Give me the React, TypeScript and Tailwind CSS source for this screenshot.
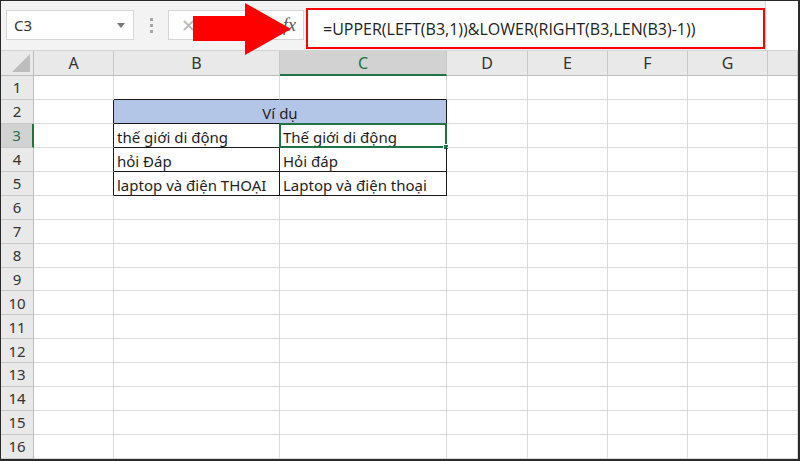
import React from "react";

const cols = [
  { key: "A", w: "w-[80px]" },
  { key: "B", w: "w-[166px]" },
  { key: "C", w: "w-[167px]" },
  { key: "D", w: "w-[81px]" },
  { key: "E", w: "w-[80px]" },
  { key: "F", w: "w-[80px]" },
  { key: "G", w: "w-[80px]" },
  { key: "H", w: "flex-1" },
];

const data: Record<string, string> = {
  B3: "thế giới di động",
  C3: "Thế giới di động",
  B4: "hỏi Đáp",
  C4: "Hỏi đáp",
  B5: "laptop và điện THOẠI",
  C5: "Laptop và điện thoại",
};

const inTable = (c: string, r: number) => (c === "B" || c === "C") && r >= 2 && r <= 5;

function Cell({ col, row }: { col: { key: string; w: string }; row: number }) {
  const k = col.key;
  const table = inTable(k, row);
  const rightBlack = table || (k === "A" && row >= 2 && row <= 5);
  const bottomBlack = (table && row >= 2) || ((k === "B" || k === "C") && row === 1);
  const selected = k === "C" && row === 3;
  return (
    <div
      className={`${col.w} h-full shrink-0 relative flex items-end pl-[3px] border-r border-b ${
        rightBlack ? "border-r-[#1a1a1a]" : "border-r-[#d9d9d9]"
      } ${bottomBlack ? "border-b-[#1a1a1a]" : "border-b-[#d9d9d9]"}`}
    >
      <span className="whitespace-nowrap leading-[20px]">{data[k + row] ?? ""}</span>
      {selected && (
        <div className="absolute -left-px -top-px -right-px -bottom-px border-2 border-[#217346]">
          <div className="absolute -right-[4px] -bottom-[4px] w-[6px] h-[6px] bg-[#217346] border border-white" />
        </div>
      )}
    </div>
  );
}

function Row({ row }: { row: number }) {
  const sel = row === 3;
  return (
    <div className="flex h-[24px]">
      <div
        className={`w-[33px] shrink-0 h-full flex items-center justify-center border-b border-[#c8c8c8] ${
          sel ? "bg-[#d2d2d2] text-[#217346] border-r-2 border-r-[#217346]" : "bg-[#e9e9e9] text-[#333] border-r border-r-[#bdbdbd]"
        }`}
      >
        {row}
      </div>
      {row === 2 ? (
        <>
          <Cell col={cols[0]} row={2} />
          <div className="w-[333px] shrink-0 h-full flex items-end justify-center bg-[#b4c6e7] border-r border-b border-[#1a1a1a]">
            <span className="leading-[20px]">Ví dụ</span>
          </div>
          {cols.slice(3).map((c) => (
            <Cell key={c.key} col={c} row={2} />
          ))}
        </>
      ) : (
        cols.map((c) => <Cell key={c.key} col={c} row={row} />)
      )}
    </div>
  );
}

function Arrow() {
  return (
    <svg width="100" height="56" viewBox="0 0 100 56" className="absolute left-[191px] top-0">
      <polygon points="1,15 53,15 53,2 99,28 53,54 53,40 1,40" fill="#ff0000" />
    </svg>
  );
}

export default function App() {
  return (
    <div
      className="w-[800px] h-[461px] overflow-hidden bg-white text-[15px] text-[#1e1e1e] border-l border-t border-r-2 border-b-2 border-[#2a2a2a] flex flex-col"
      style={{ fontFamily: '"Noto Sans", "Open Sans", sans-serif' }}
    >
      <div className="h-[50px] shrink-0 bg-[#f3f3f3] relative flex items-start border-b border-[#d4d4d4]">
        <div className="ml-[5px] mt-[9px] w-[128px] h-[30px] bg-white border border-[#d6d6d6] flex items-center justify-between pl-[7px] pr-[8px]">
          <span className="text-[15px] text-[#333]">C3</span>
          <svg width="8" height="5" viewBox="0 0 8 5">
            <polygon points="0,0 8,0 4,5" fill="#777" />
          </svg>
        </div>
        <div className="ml-[16px] mt-[17px] flex flex-col gap-[3px]">
          <span className="w-[3px] h-[3px] bg-[#a6a6a6]" />
          <span className="w-[3px] h-[3px] bg-[#a6a6a6]" />
          <span className="w-[3px] h-[3px] bg-[#a6a6a6]" />
        </div>
        <div className="ml-[15px] mt-[9px] w-[136px] h-[30px] bg-white border border-[#d6d6d6] flex items-center pl-[12px] text-[#b8b8b8]">
          <span className="text-[18px]">✕</span>
          <span className="ml-auto mr-[7px] italic text-[18px] text-[#555]" style={{ fontFamily: '"Liberation Serif", serif' }}>
            fx
          </span>
        </div>
        <div className="ml-[2px] mt-[7px] w-[459px] h-[41px] bg-white border-2 border-[#ff0000] flex items-center pl-[15px]">
          <span className="text-[16px] text-[#222] whitespace-nowrap" style={{ fontFamily: '"Open Sans", sans-serif' }}>
            =UPPER(LEFT(B3,1))&amp;LOWER(RIGHT(B3,LEN(B3)-1))
          </span>
        </div>
        <div className="flex-1 h-full bg-white border-l border-[#d4d4d4]" />
        <Arrow />
      </div>
      <div className="flex h-[25px] shrink-0">
        <div className="w-[33px] shrink-0 h-full bg-[#e9e9e9] border-r border-b border-[#bdbdbd] relative">
          <svg width="18" height="18" viewBox="0 0 18 18" className="absolute right-[3px] bottom-[3px]">
            <polygon points="18,0 18,18 0,18" fill="#bdbdbd" />
          </svg>
        </div>
        {cols.map((c) => {
          const sel = c.key === "C";
          return (
            <div
              key={c.key}
              className={`${c.w} shrink-0 h-full flex items-center justify-center text-[16px] border-r border-r-[#c8c8c8] ${
                sel ? "bg-[#d2d2d2] text-[#217346] border-b-2 border-b-[#217346]" : "bg-[#e9e9e9] text-[#333] border-b border-b-[#bdbdbd]"
              }`}
            >
              {c.key === "H" ? "" : c.key}
            </div>
          );
        })}
      </div>
      {Array.from({ length: 16 }, (_, i) => (
        <Row key={i} row={i + 1} />
      ))}
    </div>
  );
}
